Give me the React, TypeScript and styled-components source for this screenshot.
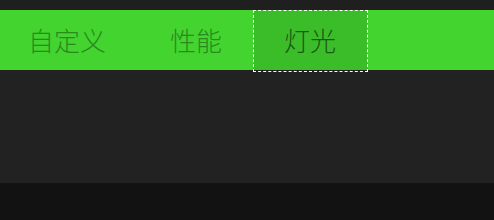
import React, { useState } from "react";
import styled, { createGlobalStyle } from "styled-components";

const GlobalStyle = createGlobalStyle`
  html, body { margin: 0; padding: 0; background: #121212; }
  body { font-family: "Noto Sans CJK SC", "Noto Sans", sans-serif; }
`;

const Page = styled.div`
  display: flex;
  flex-direction: column;
  height: 220px;
  background: #121212;
`;

const TopStrip = styled.div`
  height: 10px;
  background: #1f1f1f;
`;

const TabBar = styled.div`
  display: flex;
  height: 60px;
  background: #43d42f;
`;

const Tab = styled.div<{ $active?: boolean }>`
  position: relative;
  display: flex;
  align-items: center;
  padding: 0 31px 1px;
  font-size: 26px;
  font-weight: 300;
  line-height: 1;
  color: ${(p) => (p.$active ? "#1c5a12" : "#2a8a1e")};
  background: ${(p) => (p.$active ? "#3bbd2a" : "transparent")};
  cursor: pointer;
  &:first-child { padding-left: 28px; padding-right: 33px; }
  &:last-child { padding-right: 32px; }
  &::after {
    content: "";
    display: ${(p) => (p.$active ? "block" : "none")};
    position: absolute;
    left: 0;
    right: 0;
    top: 0;
    bottom: -2px;
    border: 1px dashed #ffffff;
    pointer-events: none;
  }
`;

const Content = styled.div`
  height: 113px;
  background: #222222;
`;

const tabs = ["自定义", "性能", "灯光"];

export default function App() {
  const [active, setActive] = useState(2);

  return (
    <Page>
      <GlobalStyle />
      <TopStrip />
      <TabBar>
        {tabs.map((t, i) => (
          <Tab key={t} $active={i === active} onClick={() => setActive(i)}>
            {t}
          </Tab>
        ))}
      </TabBar>
      <Content />
    </Page>
  );
}
